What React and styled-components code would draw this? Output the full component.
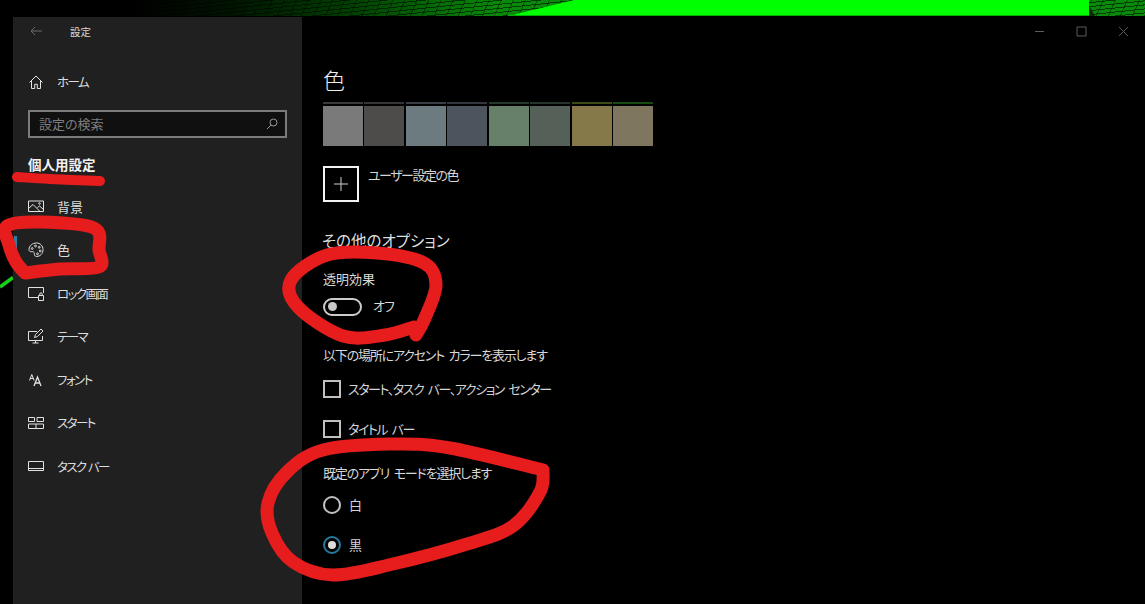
import React from 'react';
import styled, { createGlobalStyle } from 'styled-components';

const GlobalStyle = createGlobalStyle`
  html, body {
    margin: 0;
    height: 100%;
    background: #000;
    overflow: hidden;
  }
  body {
    font-family: "Noto Sans CJK JP", "Noto Sans", sans-serif;
    font-feature-settings: "palt";
    color: #ddd;
  }
`;

const Page = styled.div`
  position: relative;
  width: 1145px;
  height: 604px;
  overflow: hidden;
  display: flex;
  flex-direction: column;
`;

const Wallpaper = styled.div`
  position: relative;
  flex: 0 0 17px;
  background:
    repeating-linear-gradient(174deg, rgba(0, 0, 0, 0.55) 0 1px, transparent 1px 4px),
    repeating-linear-gradient(-66deg, rgba(0, 0, 0, 0.4) 0 1px, transparent 1px 11px),
    linear-gradient(90deg, #000 0 130px, #001400 230px, #013f01 350px, #0a8a0a 500px, #0a8a0a 100%);
  border-bottom: 1px solid #000;
  box-sizing: border-box;
`;

const WallpaperShape = styled.svg`
  position: absolute;
  left: 0;
  top: 0;
`;

const Desktop = styled.div`
  flex: 1;
  display: flex;
  min-height: 0;
`;

const Gutter = styled.div`
  flex: 0 0 13px;
`;

const GutterLine = styled.svg`
  display: block;
  margin-top: 257px;
`;

const Sidebar = styled.aside`
  flex: 0 0 289px;
  background: #202020;
  display: flex;
  flex-direction: column;
`;

const SidebarHead = styled.div`
  height: 28px;
  display: flex;
  align-items: center;
  padding-left: 17px;
  gap: 28px;
  font-size: 10.5px;
  color: #d8d8d8;
`;

const NavRow = styled.div`
  position: relative;
  height: 43.3px;
  display: flex;
  align-items: center;
  padding-left: 15px;
  font-size: ${props => (props.$kana ? '12.5px' : '13px')};
  letter-spacing: ${props => (props.$kana ? '-1.6px' : '0')};
  word-spacing: 1px;
  color: #dcdcdc;
  flex-shrink: 0;
`;

const HomeRow = styled(NavRow)`
  margin-top: 15px;
`;

const NavIcon = styled.span`
  width: 16px;
  height: 16px;
  margin-right: 13px;
  display: flex;
  align-items: center;
  justify-content: center;
  color: #e2e2e2;
`;

const SelectedBar = styled.span`
  position: absolute;
  left: 1px;
  top: 8px;
  width: 3px;
  height: 26px;
  background: #2a7fa5;
`;

const SearchBox = styled.div`
  margin: 7px 15px 0;
  height: 28px;
  box-sizing: border-box;
  border: 2px solid #7b7b7b;
  background: #101010;
  display: flex;
  align-items: center;
  justify-content: space-between;
  padding: 0 7px 1px 9px;
  font-size: 13px;
  color: #7d7d7d;
`;

const SectionTitle = styled.div`
  margin: 16px 0 10.5px 15px;
  height: 20px;
  line-height: 20px;
  font-size: 13.5px;
  font-weight: 700;
  color: #f2f2f2;
`;

const Main = styled.main`
  flex: 1;
  background: #000;
  display: flex;
  flex-direction: column;
`;

const WindowBar = styled.div`
  height: 28px;
  display: flex;
  justify-content: flex-end;
  align-items: center;
  padding-right: 16px;
  gap: 31px;
  color: #5c5c5c;
`;

const Content = styled.div`
  padding: 19px 0 0 21px;
  display: flex;
  flex-direction: column;
  align-items: flex-start;
`;

const PageTitle = styled.h1`
  margin: 0;
  height: 30px;
  line-height: 30px;
  font-size: 22px;
  font-weight: 300;
  color: #f0f0f0;
`;

const SwatchGrid = styled.div`
  margin-top: 8px;
  width: 330px;
  display: grid;
  grid-template-columns: repeat(8, 1fr);
  gap: 1.4px;
`;

const SwatchColumn = styled.div`
  display: flex;
  flex-direction: column;
  gap: 2px;
`;

const SwatchRim = styled.div`
  height: 2px;
  background: ${props => props.$color};
`;

const Swatch = styled.div`
  height: 40px;
  background: ${props => props.$color};
`;

const CustomColor = styled.div`
  margin-top: 20px;
  display: flex;
  align-items: flex-start;
  gap: 9px;
  font-size: 13px;
  letter-spacing: -1.5px;
  color: #d6d6d6;
`;

const PlusButton = styled.div`
  width: 36px;
  height: 36px;
  box-sizing: border-box;
  border: 2px solid #f4f4f4;
  display: flex;
  align-items: center;
  justify-content: center;
  color: #d0d0d0;
`;

const CustomLabel = styled.span`
  line-height: 18px;
`;

const SubHeading = styled.h2`
  margin: 26px 0 0 -1px;
  height: 24px;
  line-height: 24px;
  font-size: 15.5px;
  font-weight: 400;
  color: #dedede;
`;

const Label = styled.div`
  margin-top: ${props => props.$top}px;
  height: 18px;
  line-height: 16px;
  font-size: 13px;
  letter-spacing: ${props => props.$spacing || 0}px;
  word-spacing: 3px;
  color: #d8d8d8;
`;

const RowText = styled.span`
  margin-bottom: 2px;
`;

const ToggleRow = styled.div`
  margin-top: 7px;
  display: flex;
  align-items: center;
  gap: 11px;
  font-size: 13px;
  letter-spacing: -1px;
  color: #d8d8d8;
`;

const Toggle = styled.div`
  width: 39px;
  height: 18px;
  box-sizing: border-box;
  border: 2px solid #cccccc;
  border-radius: 9px;
  display: flex;
  align-items: center;
  padding-left: 3px;
`;

const ToggleKnob = styled.span`
  width: 9px;
  height: 9px;
  border-radius: 50%;
  background: #c8c8c8;
`;

const CheckRow = styled.div`
  margin-top: ${props => props.$top}px;
  height: 18px;
  display: flex;
  align-items: center;
  gap: 7px;
  font-size: 13px;
  letter-spacing: -1.45px;
  word-spacing: 3px;
  color: #d4d4d4;
`;

const CheckBox = styled.span`
  width: 18px;
  height: 18px;
  box-sizing: border-box;
  border: 2px solid #c0c0c0;
`;

const RadioRow = styled.div`
  margin-top: ${props => props.$top}px;
  height: 18px;
  display: flex;
  align-items: center;
  gap: 8px;
  font-size: 13px;
  color: #d4d4d4;
`;

const Radio = styled.span`
  width: 18px;
  height: 18px;
  box-sizing: border-box;
  border-radius: 50%;
  border: 2px solid ${props => (props.$checked ? '#25799c' : '#c0c0c0')};
  display: flex;
  align-items: center;
  justify-content: center;
  &::after {
    content: '';
    display: ${props => (props.$checked ? 'block' : 'none')};
    width: 8px;
    height: 8px;
    border-radius: 50%;
    background: #dcdcdc;
  }
`;

const MarkerLayer = styled.svg`
  position: absolute;
  left: 0;
  top: 0;
  pointer-events: none;
`;

const MarkerStroke = styled.path`
  fill: none;
  stroke: #e71c1c;
  stroke-width: ${props => props.$width}px;
  stroke-linecap: round;
  stroke-linejoin: round;
`;

const Glyph = ({ children }) => (
  <svg width="16" height="16" viewBox="0 0 16 16" fill="none" stroke="currentColor" strokeWidth="1">
    {children}
  </svg>
);

const HomeIcon = () => (
  <Glyph>
    <path d="M1.5 8.5 8 2l6.5 6.5M3.5 7v7.5h3.2v-4.2h2.6v4.2h3.2V7" />
  </Glyph>
);

const PictureIcon = () => (
  <Glyph>
    <path d="M.5 3h15v10.5H.5z" />
    <path d="M.5 10.5 5 6.5l7 7M9.5 9.5l2-1.5 4 3.5" />
    <circle cx="11.5" cy="5.5" r="0.8" />
  </Glyph>
);

const PaletteIcon = () => (
  <Glyph>
    <path d="M8.5 1C4.5 1 1 3.8 1 7.5c0 1.6 1.2 2.4 2.6 2.2 1.4-.2 2.7.2 2.7 1.7 0 1 .2 3.1 2.3 3.1 3.6 0 6.4-3 6.4-6.8C15 3.8 12.2 1 8.5 1z" />
    <circle cx="4.2" cy="6.5" r="0.9" />
    <circle cx="7.5" cy="4" r="0.9" />
    <circle cx="11.2" cy="5.3" r="0.9" />
    <circle cx="12.2" cy="9" r="0.9" />
    <circle cx="9.5" cy="11.8" r="0.9" />
  </Glyph>
);

const LockScreenIcon = () => (
  <Glyph>
    <path d="M10 12.5H.5v-10h15V8" />
    <path d="M10.5 10.5h5v5h-5zM11.8 10.5V9a1.2 1.2 0 0 1 2.4 0v1.5" />
  </Glyph>
);

const ThemeIcon = () => (
  <Glyph>
    <path d="M9 3.5H.5v9h14V8M7.5 12.5V15M4.5 15h6" />
    <path d="m6.5 9.5 1-3L13 1l2 2-5.5 5.5z" />
  </Glyph>
);

const FontIcon = () => (
  <Glyph>
    <path d="M1.5 8.5 3.8 2.5l2.3 6M2.4 6.5h2.8" />
    <path d="M6 14 9.5 5l3.5 9M7.2 11h4.6" strokeWidth="1.3" />
  </Glyph>
);

const StartIcon = () => (
  <Glyph>
    <path d="M.5 2.5h6v4h-6zM9 2.5h6.5v4H9zM.5 9h15v4.5H.5zM8 9v4.5" />
  </Glyph>
);

const TaskbarIcon = () => (
  <Glyph>
    <path d="M.5 3.5h15v9H.5zM.5 10.5h15" />
  </Glyph>
);

const navItems = [
  { label: '背景', icon: <PictureIcon /> },
  { label: '色', icon: <PaletteIcon />, selected: true },
  { label: 'ロック画面', icon: <LockScreenIcon />, kana: true },
  { label: 'テーマ', icon: <ThemeIcon />, kana: true },
  { label: 'フォント', icon: <FontIcon />, kana: true },
  { label: 'スタート', icon: <StartIcon />, kana: true },
  { label: 'タスク バー', icon: <TaskbarIcon />, kana: true },
];

const swatches = [
  { rim: '#3a3a3a', fill: '#7a7a7a' },
  { rim: '#353535', fill: '#4d4c4a' },
  { rim: '#3a3f47', fill: '#6b7b80' },
  { rim: '#30363c', fill: '#4c545e' },
  { rim: '#24382c', fill: '#66806a' },
  { rim: '#26352c', fill: '#556058' },
  { rim: '#3a4a10', fill: '#85794a' },
  { rim: '#14490f', fill: '#7f7660' },
];

// marker strokes someone drew over the screenshot, as points on the page
const markers = [
  { width: 10, points: [[17, 177], [50, 179], [100, 181]] },
  {
    width: 13,
    points: [[25, 273], [16, 262], [9, 245], [7, 226], [40, 222], [94, 228], [99, 250], [99, 267], [60, 269], [25, 273]],
  },
  {
    width: 13,
    points: [[416, 335], [425, 318], [436, 285], [424, 263], [377, 253], [327, 255], [291, 280], [298, 307], [343, 336], [385, 335], [414, 327]],
  },
  {
    width: 13,
    points: [[543, 470], [450, 448], [390, 444], [323, 450], [287, 472], [268, 503], [272, 533], [293, 562], [333, 575], [393, 564], [467, 544], [513, 526], [540, 492], [543, 470]],
  },
];

const smoothPath = points => {
  let d = `M${points[0][0]} ${points[0][1]}`;
  for (let i = 0; i < points.length - 1; i += 1) {
    const p0 = points[Math.max(i - 1, 0)];
    const p1 = points[i];
    const p2 = points[i + 1];
    const p3 = points[Math.min(i + 2, points.length - 1)];
    const c1 = [p1[0] + (p2[0] - p0[0]) / 6, p1[1] + (p2[1] - p0[1]) / 6];
    const c2 = [p2[0] - (p3[0] - p1[0]) / 6, p2[1] - (p3[1] - p1[1]) / 6];
    d += ` C${c1[0]} ${c1[1]} ${c2[0]} ${c2[1]} ${p2[0]} ${p2[1]}`;
  }
  return d;
};

export default function App() {
  return (
    <Page>
      <GlobalStyle />
      <Wallpaper>
        <WallpaperShape width="1145" height="16" viewBox="0 0 1145 16">
          <polygon points="508,16 574,0 1089,0 1089,16" fill="#00ff00" />
          <rect x="508" y="15" width="581" height="1" fill="#00b000" />
          <polygon points="1089,5 1095,16 1089,16" fill="#0a2a0a" />
        </WallpaperShape>
      </Wallpaper>
      <Desktop>
        <Gutter>
          <GutterLine width="13" height="20" viewBox="0 0 13 20">
            <path d="M0 13 13 3.5" stroke="#18d018" strokeWidth="3.5" />
          </GutterLine>
        </Gutter>
        <Sidebar>
          <SidebarHead>
            <svg width="12" height="10" viewBox="0 0 12 10" fill="none" stroke="#6a6a6a">
              <path d="M12 5H1M5 1 1 5l4 4" />
            </svg>
            <span>設定</span>
          </SidebarHead>
          <HomeRow $kana>
            <NavIcon><HomeIcon /></NavIcon>
            ホーム
          </HomeRow>
          <SearchBox>
            設定の検索
            <svg width="12" height="12" viewBox="0 0 12 12" fill="none" stroke="#9a9a9a">
              <circle cx="7.5" cy="4.5" r="3.5" />
              <path d="M5 7 1 11" />
            </svg>
          </SearchBox>
          <SectionTitle>個人用設定</SectionTitle>
          {navItems.map(item => (
            <NavRow key={item.label} $kana={item.kana}>
              {item.selected && <SelectedBar />}
              <NavIcon>{item.icon}</NavIcon>
              {item.label}
            </NavRow>
          ))}
        </Sidebar>
        <Main>
          <WindowBar>
            <svg width="11" height="11" viewBox="0 0 11 11" stroke="currentColor"><path d="M1 5.5h9" /></svg>
            <svg width="11" height="11" viewBox="0 0 11 11" fill="none" stroke="currentColor"><path d="M1 1h9v9H1z" /></svg>
            <svg width="11" height="11" viewBox="0 0 11 11" stroke="currentColor"><path d="m1 1 9 9M10 1l-9 9" /></svg>
          </WindowBar>
          <Content>
            <PageTitle>色</PageTitle>
            <SwatchGrid>
              {swatches.map(swatch => (
                <SwatchColumn key={swatch.fill}>
                  <SwatchRim $color={swatch.rim} />
                  <Swatch $color={swatch.fill} />
                </SwatchColumn>
              ))}
            </SwatchGrid>
            <CustomColor>
              <PlusButton>
                <svg width="14" height="14" viewBox="0 0 14 14" stroke="currentColor"><path d="M7 0v14M0 7h14" /></svg>
              </PlusButton>
              <CustomLabel>ユーザー設定の色</CustomLabel>
            </CustomColor>
            <SubHeading>その他のオプション</SubHeading>
            <Label $top={19}>透明効果</Label>
            <ToggleRow>
              <Toggle><ToggleKnob /></Toggle>
              <RowText>オフ</RowText>
            </ToggleRow>
            <Label $top={30} $spacing={-1.2}>以下の場所にアクセント カラーを表示します</Label>
            <CheckRow $top={15}>
              <CheckBox />
              <RowText>スタート、タスク バー、アクション センター</RowText>
            </CheckRow>
            <CheckRow $top={22}>
              <CheckBox />
              <RowText>タイトル バー</RowText>
            </CheckRow>
            <Label $top={27} $spacing={-1.2}>既定のアプリ モードを選択します</Label>
            <RadioRow $top={13}>
              <Radio />
              <RowText>白</RowText>
            </RadioRow>
            <RadioRow $top={22}>
              <Radio $checked />
              <RowText>黒</RowText>
            </RadioRow>
          </Content>
        </Main>
      </Desktop>
      <MarkerLayer width="1145" height="604" viewBox="0 0 1145 604">
        {markers.map(marker => (
          <MarkerStroke key={marker.points[0].join()} $width={marker.width} d={smoothPath(marker.points)} />
        ))}
      </MarkerLayer>
    </Page>
  );
}
